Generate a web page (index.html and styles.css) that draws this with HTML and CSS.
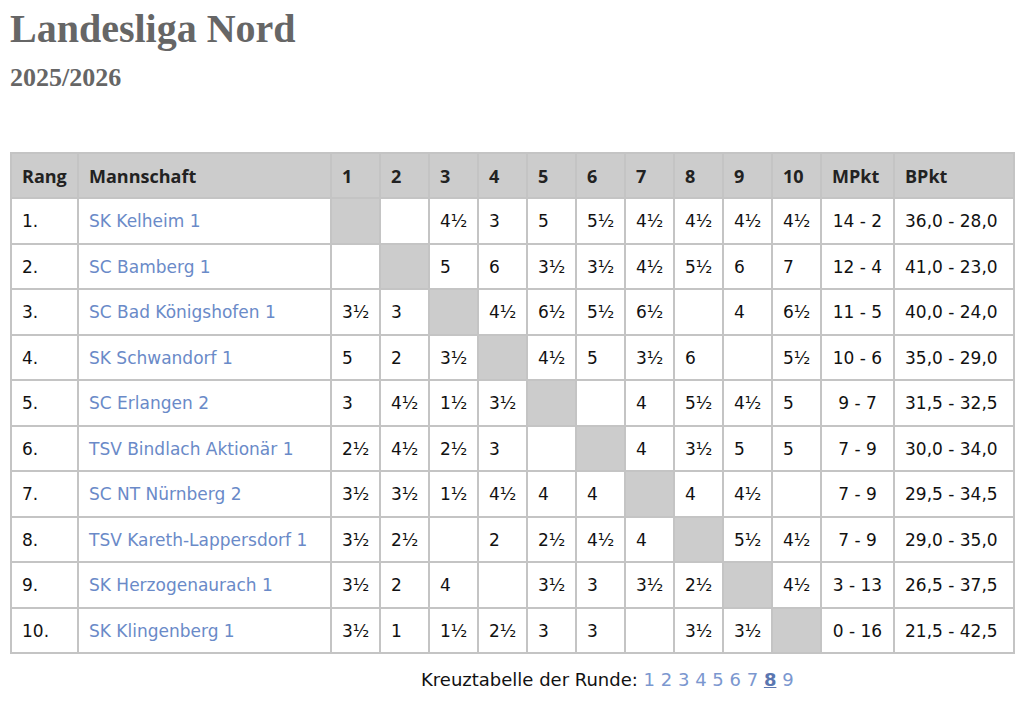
FILE: index.html
```html
<!DOCTYPE html>
<html lang="de">
<head>
<meta charset="utf-8">
<title>Landesliga Nord 2025/2026</title>
<link rel="stylesheet" href="styles.css">
</head>
<body>
<div class="page">
  <h1 class="title">Landesliga Nord</h1>
  <h2 class="season">2025/2026</h2>
  <table class="cross">
    <colgroup>
      <col class="c-rang"><col class="c-team">
      <col class="c-num"><col class="c-num"><col class="c-num"><col class="c-num"><col class="c-num">
      <col class="c-num"><col class="c-num"><col class="c-num"><col class="c-num"><col class="c-num">
      <col class="c-mp"><col class="c-bp">
    </colgroup>
    <thead>
      <tr><th>Rang</th><th>Mannschaft</th><th>1</th><th>2</th><th>3</th><th>4</th><th>5</th><th>6</th><th>7</th><th>8</th><th>9</th><th>10</th><th>MPkt</th><th>BPkt</th></tr>
    </thead>
    <tbody>
      <tr><td>1.</td><td><a href="#">SK Kelheim 1</a></td><td class="x"></td><td></td><td>4½</td><td>3</td><td>5</td><td>5½</td><td>4½</td><td>4½</td><td>4½</td><td>4½</td><td class="mp">14 - 2</td><td>36,0 - 28,0</td></tr>
      <tr><td>2.</td><td><a href="#">SC Bamberg 1</a></td><td></td><td class="x"></td><td>5</td><td>6</td><td>3½</td><td>3½</td><td>4½</td><td>5½</td><td>6</td><td>7</td><td class="mp">12 - 4</td><td>41,0 - 23,0</td></tr>
      <tr><td>3.</td><td><a href="#">SC Bad Königshofen 1</a></td><td>3½</td><td>3</td><td class="x"></td><td>4½</td><td>6½</td><td>5½</td><td>6½</td><td></td><td>4</td><td>6½</td><td class="mp">11 - 5</td><td>40,0 - 24,0</td></tr>
      <tr><td>4.</td><td><a href="#">SK Schwandorf 1</a></td><td>5</td><td>2</td><td>3½</td><td class="x"></td><td>4½</td><td>5</td><td>3½</td><td>6</td><td></td><td>5½</td><td class="mp">10 - 6</td><td>35,0 - 29,0</td></tr>
      <tr><td>5.</td><td><a href="#">SC Erlangen 2</a></td><td>3</td><td>4½</td><td>1½</td><td>3½</td><td class="x"></td><td></td><td>4</td><td>5½</td><td>4½</td><td>5</td><td class="mp">9 - 7</td><td>31,5 - 32,5</td></tr>
      <tr><td>6.</td><td><a href="#">TSV Bindlach Aktionär 1</a></td><td>2½</td><td>4½</td><td>2½</td><td>3</td><td></td><td class="x"></td><td>4</td><td>3½</td><td>5</td><td>5</td><td class="mp">7 - 9</td><td>30,0 - 34,0</td></tr>
      <tr><td>7.</td><td><a href="#">SC NT Nürnberg 2</a></td><td>3½</td><td>3½</td><td>1½</td><td>4½</td><td>4</td><td>4</td><td class="x"></td><td>4</td><td>4½</td><td></td><td class="mp">7 - 9</td><td>29,5 - 34,5</td></tr>
      <tr><td>8.</td><td><a href="#">TSV Kareth-Lappersdorf 1</a></td><td>3½</td><td>2½</td><td></td><td>2</td><td>2½</td><td>4½</td><td>4</td><td class="x"></td><td>5½</td><td>4½</td><td class="mp">7 - 9</td><td>29,0 - 35,0</td></tr>
      <tr><td>9.</td><td><a href="#">SK Herzogenaurach 1</a></td><td>3½</td><td>2</td><td>4</td><td></td><td>3½</td><td>3</td><td>3½</td><td>2½</td><td class="x"></td><td>4½</td><td class="mp">3 - 13</td><td>26,5 - 37,5</td></tr>
      <tr><td>10.</td><td><a href="#">SK Klingenberg 1</a></td><td>3½</td><td>1</td><td>1½</td><td>2½</td><td>3</td><td>3</td><td></td><td>3½</td><td>3½</td><td class="x"></td><td class="mp">0 - 16</td><td>21,5 - 42,5</td></tr>
    </tbody>
  </table>
  <div class="rounds">
    <span>Kreuztabelle der Runde:</span>
    <a href="#">1</a> <a href="#">2</a> <a href="#">3</a> <a href="#">4</a> <a href="#">5</a> <a href="#">6</a> <a href="#">7</a> <a href="#" class="current">8</a> <a href="#">9</a>
  </div>
</div>
</body>
</html>
```
FILE: styles.css
```css
html, body {
  margin: 0;
  padding: 0;
  background: #ffffff;
}

.page {
  padding: 0 10px;
}

.title {
  margin: 5px 0 0;
  font-family: "Liberation Serif", "Times New Roman", serif;
  font-size: 40px;
  line-height: 48px;
  font-weight: bold;
  color: #666666;
}

.season {
  margin: 9px 0 0;
  font-family: "Liberation Serif", "Times New Roman", serif;
  font-size: 26px;
  line-height: 32px;
  font-weight: bold;
  color: #666666;
}

.cross {
  margin-top: 58px;
  width: 1003px;
  table-layout: fixed;
  border-collapse: separate;
  border-spacing: 0;
  border: 1px solid #c4c4c4;
  font-family: "DejaVu Sans", "Noto Sans", sans-serif;
  font-size: 17px;
  color: #111111;
}

.c-rang { width: 67px; }
.c-team { width: 253px; }
.c-num { width: 49px; }
.c-mp { width: 73px; }
.c-bp { width: 120px; }

.cross th,
.cross td {
  border: 1px solid #c4c4c4;
  padding: 1px 0 0 10px;
  text-align: left;
  vertical-align: middle;
  white-space: nowrap;
}

.cross th {
  height: 42px;
  background: #cccccc;
  font-family: "Open Sans", "Noto Sans", sans-serif;
  font-size: 18px;
  font-weight: bold;
  color: #222222;
}

.cross td {
  height: 42.5px;
}

.cross td.x {
  background: #cccccc;
}

.cross td.mp {
  text-align: center;
  padding: 1px 0 0;
}

.cross a {
  color: #6a8ac8;
  text-decoration: none;
}

.rounds {
  padding: 15px 0 0 411px;
  font-family: "DejaVu Sans", "Noto Sans", sans-serif;
  font-size: 18px;
  color: #111111;
}

.rounds a {
  color: #7b97cf;
  text-decoration: none;
}

.rounds a.current {
  color: #5a76b0;
  font-weight: bold;
  text-decoration: underline;
}
```
